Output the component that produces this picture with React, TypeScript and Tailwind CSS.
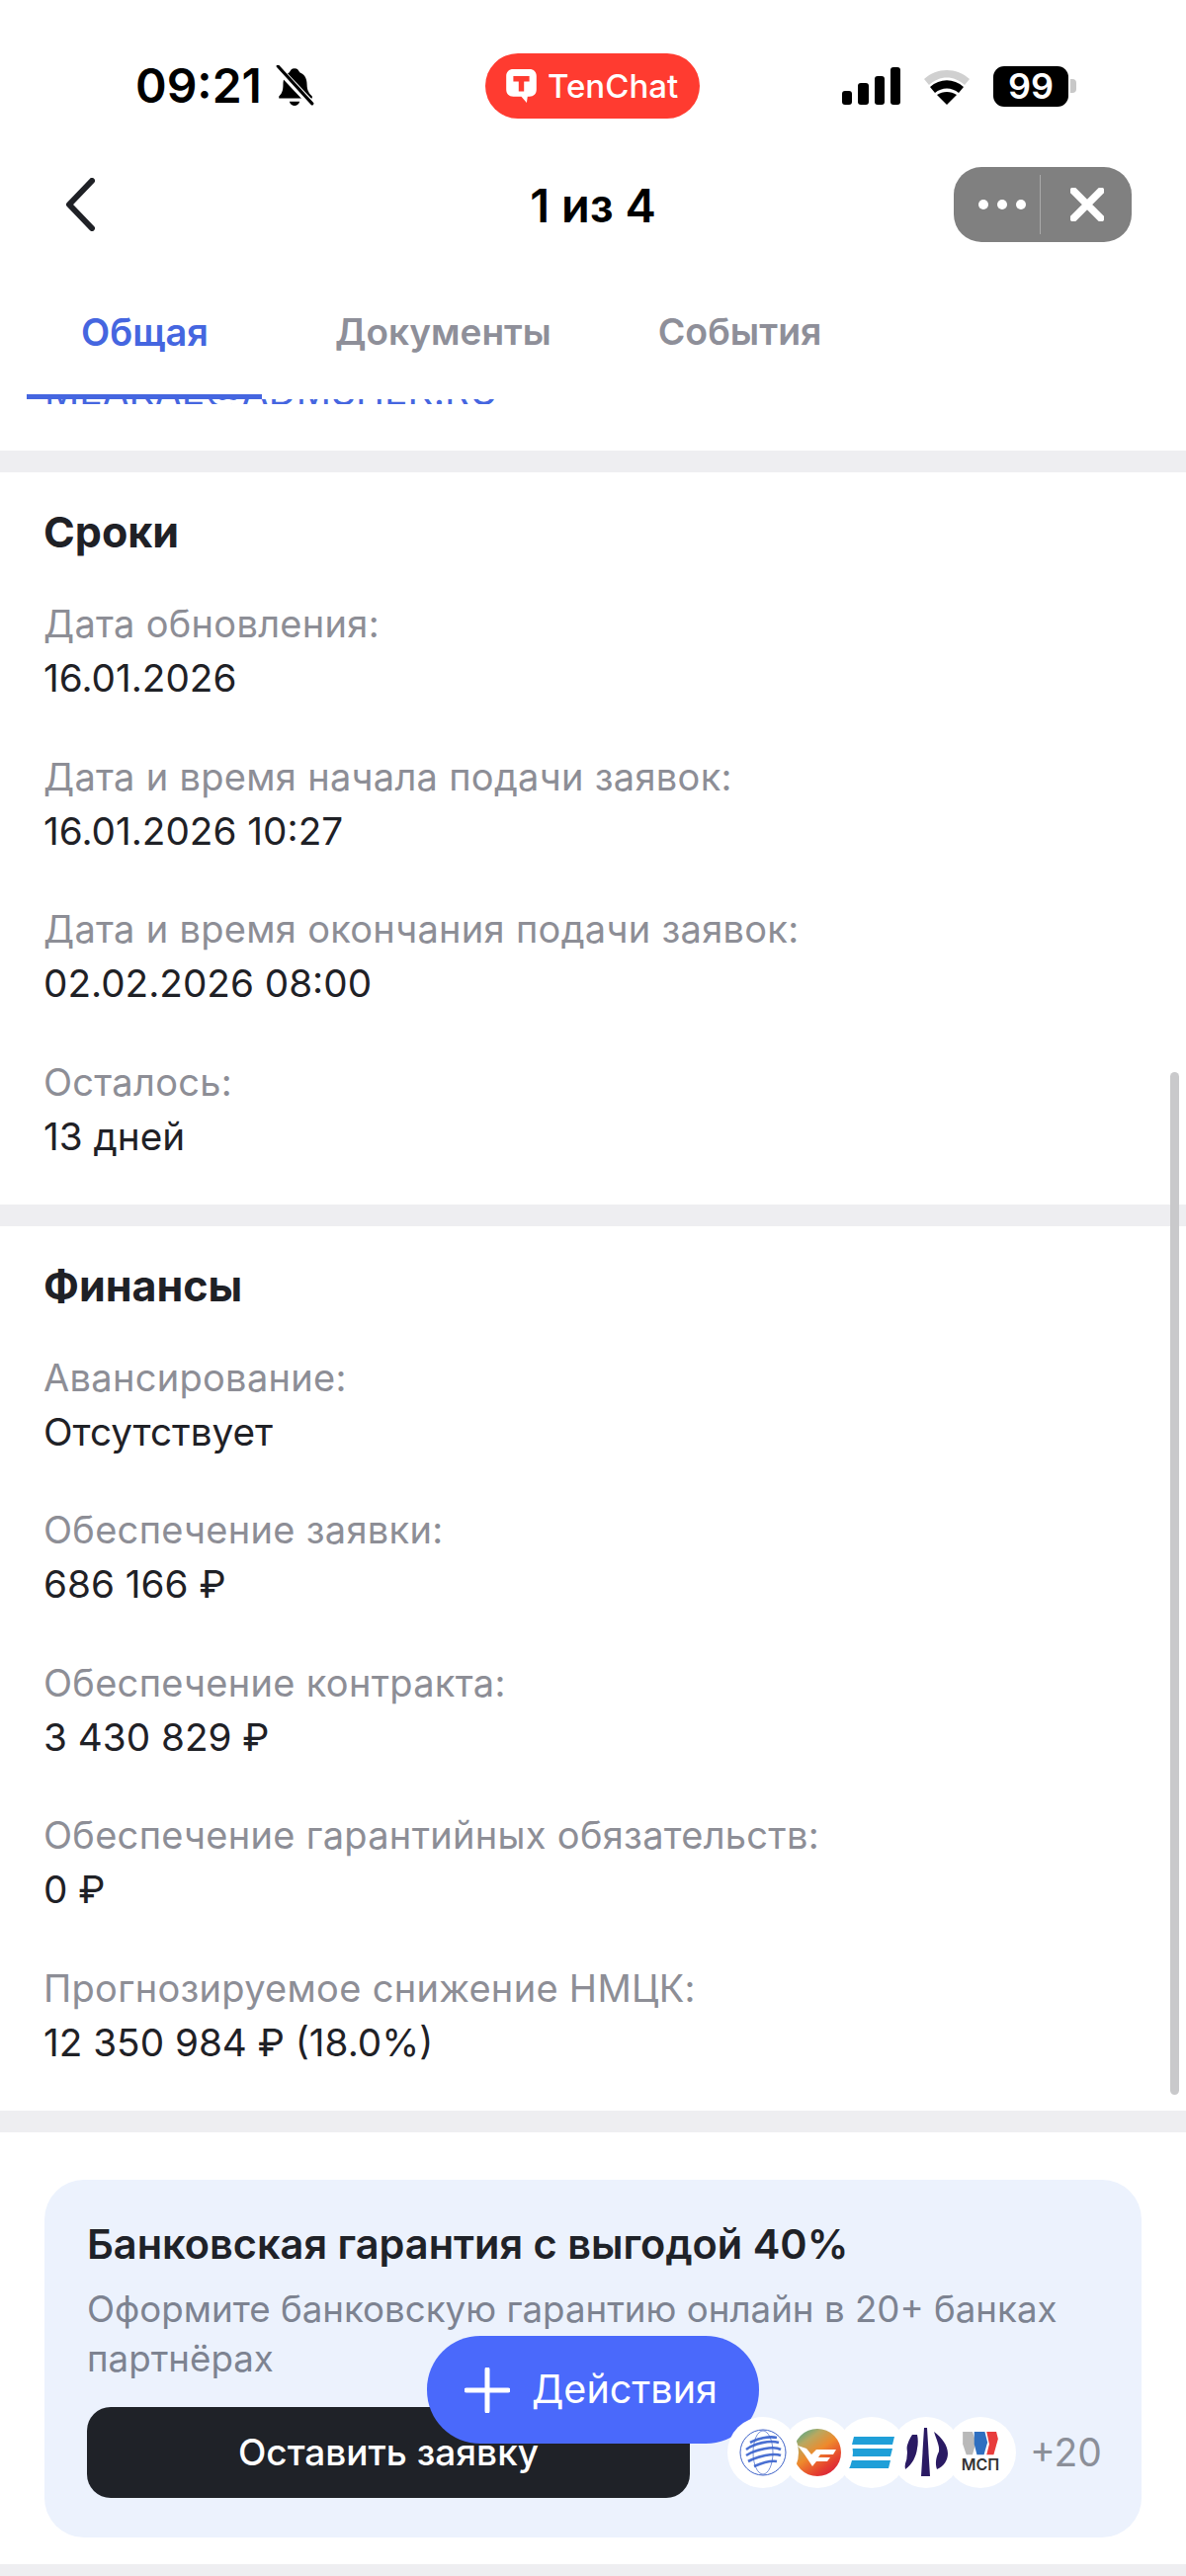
const srokiRows = [
  { label: 'Дата обновления:', value: '16.01.2026' },
  { label: 'Дата и время начала подачи заявок:', value: '16.01.2026 10:27' },
  { label: 'Дата и время окончания подачи заявок:', value: '02.02.2026 08:00' },
  { label: 'Осталось:', value: '13 дней' },
];

const financeRows = [
  { label: 'Авансирование:', value: 'Отсутствует' },
  { label: 'Обеспечение заявки:', value: '686 166 ₽' },
  { label: 'Обеспечение контракта:', value: '3 430 829 ₽' },
  { label: 'Обеспечение гарантийных обязательств:', value: '0 ₽' },
  { label: 'Прогнозируемое снижение НМЦК:', value: '12 350 984 ₽ (18.0%)' },
];

const Band = () => <div className="h-[22px] bg-[#eeeef1]" />;

const Section = ({ title, rows }: { title: string; rows: { label: string; value: string }[] }) => (
  <section className="pl-[44px] pt-[35px] pb-[41px]">
    <h2 className="text-[43px] leading-[50px] font-bold text-[#1f2126]">{title}</h2>
    <div className="mt-[41px] flex flex-col gap-[44.5px]">
      {rows.map((row) => (
        <div key={row.label} className="leading-[55px]">
          <div className="text-[38px] tracking-[0.3px] text-[#8d8e96]">{row.label}</div>
          <div className="text-[38.7px] text-[#1f2126]">{row.value}</div>
        </div>
      ))}
    </div>
  </section>
);

const StatusBar = () => (
  <div className="flex h-[174px] items-start pt-[54px]">
    <div className="flex h-[66px] w-[491px] items-center pl-[137px]">
      <span className="text-[48px] leading-none font-semibold text-black">09:21</span>
      <svg viewBox="0 0 40 40" className="ml-[12px] h-[42px] w-[42px]">
        <path d="M20 3c3 0 4 2 5 4 5 2 7 6 7 12 0 5 2 8 5 11v2H5v-2c3-3 4-6 4-11 0-6 2-10 6-12 1-2 2-4 5-4z" fill="#000" />
        <path d="M15 35h10c-1 3-3 4-5 4s-4-1-5-4z" fill="#000" />
        <path d="M3 2l34 36" stroke="#fff" strokeWidth="7" />
        <path d="M4 1l33 36" stroke="#000" strokeWidth="3" strokeLinecap="round" />
      </svg>
    </div>
    <div className="flex h-[66px] w-[217px] items-center gap-[10px] rounded-[33px] bg-[#ff3b30] pl-[20px]">
      <svg viewBox="0 0 36 40" className="h-[36px] w-[33px]">
        <path d="M9 1h18c5 0 8 3 8 8v15c0 5-3 8-8 8h-2l-1 7-6-7H9c-5 0-8-3-8-8V9c0-5 3-8 8-8z" fill="#fff" />
        <path d="M9 9h18v6h-6v11h-6V15H9z" fill="#ff3b30" />
      </svg>
      <span className="text-[33px] leading-none font-medium text-white">TenChat</span>
    </div>
    <div className="ml-[144px] flex h-[66px] items-center">
      <div className="flex h-[38px] items-end gap-[6px]">
        <div className="h-[14px] w-[10px] rounded-[3px] bg-black" />
        <div className="h-[22px] w-[11px] rounded-[3px] bg-black" />
        <div className="h-[29px] w-[10px] rounded-[3px] bg-black" />
        <div className="h-[38px] w-[10px] rounded-[3px] bg-black" />
      </div>
      <svg viewBox="0 0 52 38" className="ml-[21px] h-[38px] w-[52px]">
        <path d="M3 12C16 0 36 0 49 12l-5 6C33 8 19 8 8 18z" fill="#d0d0d0" />
        <path d="M9 20c10-9 24-9 34 0l-5 6c-7-6-17-6-24 0z" fill="#000" />
        <path d="M16 28c6-4 14-4 20 0L26 38z" fill="#000" />
      </svg>
      <div className="ml-[21px] flex h-[41px] w-[76px] items-center justify-center rounded-[11px] bg-black text-[36px] leading-none font-semibold text-white">
        99
      </div>
      <div className="ml-[2px] h-[14px] w-[6px] rounded-r-[4px] bg-[#c8c8c8]" />
    </div>
  </div>
);

const NavBar = () => (
  <div className="relative flex h-[91px] items-center justify-center">
    <svg viewBox="0 0 32 54" className="absolute top-[6px] left-[65px] h-[54px] w-[32px]">
      <path d="M28 3L5 27l23 24" fill="none" stroke="#1f2126" strokeWidth="6" strokeLinecap="round" strokeLinejoin="round" />
    </svg>
    <span className="-mt-[25px] text-[47px] leading-none font-semibold text-black">1 из 4</span>
    <div className="absolute top-[-5px] right-[55px] flex h-[76px] w-[180px] items-center rounded-[28px] bg-[#808080]">
      <div className="flex w-[87px] items-center justify-end gap-[9px] pr-[14px]">
        <div className="h-[10px] w-[10px] rounded-full bg-white" />
        <div className="h-[10px] w-[10px] rounded-full bg-white" />
        <div className="h-[10px] w-[10px] rounded-full bg-white" />
      </div>
      <div className="h-[60px] w-px bg-[#a9a9a9]" />
      <svg viewBox="0 0 32 32" className="ml-[30px] h-[34px] w-[34px]">
        <path d="M3 3l26 26M29 3L3 29" stroke="#fff" strokeWidth="7" strokeLinecap="round" />
      </svg>
    </div>
  </div>
);

const Tabs = () => (
  <div className="flex h-[134px] items-start pt-[46px] text-[37px] leading-[50px] font-semibold text-[#8e8f99]">
    <span className="ml-[82px] text-[38px] text-[#4566e0]">Общая</span>
    <span className="ml-[128px]">Документы</span>
    <span className="ml-[108px] text-[37.5px]">События</span>
  </div>
);

const Logos = () => (
  <div className="flex shrink-0 items-center">
    <div className="relative z-50 flex h-[72px] w-[72px] items-center justify-center rounded-full bg-white">
      <svg viewBox="0 0 48 48" className="h-[48px] w-[48px]">
        <circle cx="24" cy="24" r="23" fill="none" stroke="#3f63c8" strokeWidth="1" />
        <path d="M11 14c7-4 19-7 27-5M7 21c8-6 24-10 33-7M7 27c9-6 28-10 35-6M9 33c9-5 26-9 33-6M15 38c7-3 17-6 23-5" fill="none" stroke="#4a70d2" strokeWidth="2.6" />
        <ellipse cx="24" cy="24" rx="10" ry="22" fill="none" stroke="#3f63c8" strokeWidth="0.7" />
      </svg>
    </div>
    <div className="relative z-40 -ml-[17px] flex h-[72px] w-[72px] items-center justify-center rounded-full bg-white">
      <svg viewBox="0 0 48 48" className="h-[48px] w-[48px]">
        <defs>
          <linearGradient id="vtbg" x1="0.1" y1="0" x2="0.8" y2="1">
            <stop offset="0" stopColor="#3fa88e" />
            <stop offset="0.25" stopColor="#b9a860" />
            <stop offset="0.5" stopColor="#ee8a2c" />
            <stop offset="0.8" stopColor="#e5402f" />
            <stop offset="1" stopColor="#d81f3c" />
          </linearGradient>
        </defs>
        <circle cx="24" cy="24" r="24" fill="url(#vtbg)" />
        <path d="M4 17l9 3 5 6 5-5h20l-3 5H27l-2 3h12l-3 4h-11l-4 5-8-12z" fill="#fff" />
      </svg>
    </div>
    <div className="relative z-30 -ml-[17px] flex h-[72px] w-[72px] items-center justify-center rounded-full bg-white">
      <svg viewBox="0 0 46 32" className="h-[32px] w-[46px]">
        <path d="M5 0h41l-2 8H3zM3 12h41l-2 8H1zM2 24h40l-2 8H0z" fill="#1f9fd8" />
      </svg>
    </div>
    <div className="relative z-20 -ml-[17px] flex h-[72px] w-[72px] items-center justify-center rounded-full bg-white">
      <svg viewBox="0 0 44 50" className="h-[50px] w-[44px]">
        <path d="M20 0h3l3 49h-9z" fill="#2a1a63" />
        <path d="M8 7h5c1 4 1 9 0 14-1 8-5 16-12 21C-1 30 2 16 8 7z" fill="#2a1a63" />
        <path d="M30 4c8 6 14 14 14 22 0 7-4 13-11 16-2-6-1-12 2-18 1-6-3-13-5-20z" fill="#2a1a63" />
      </svg>
    </div>
    <div className="relative z-10 -ml-[17px] flex h-[72px] w-[72px] flex-col items-center justify-center rounded-full bg-white">
      <svg viewBox="0 0 40 28" className="h-[25px] w-[40px]">
        <path d="M0 0h11l4 12-4 14H4L0 14z" fill="#b9b9b9" />
        <path d="M13 0h12l3 12-4 14h-8l-3-12z" fill="#2f6fc0" />
        <path d="M27 0h11l2 8-5 18h-8l3-12z" fill="#e83c3c" />
      </svg>
      <span className="mt-[1px] text-[16px] leading-[15px] font-semibold text-[#333333]">МСП</span>
    </div>
    <span className="ml-[14px] text-[39px] leading-none text-[#8b8f99]">+20</span>
  </div>
);

const PromoCard = () => (
  <div className="px-[45px] pt-[48px] pb-[27px]">
    <div className="rounded-[40px] bg-[#ecf2fd] pl-[43px] pt-[37px] pb-[40px]">
      <h3 className="text-[41.5px] leading-[56px] font-semibold text-[#1f2228]">Банковская гарантия с выгодой 40%</h3>
      <p className="mt-[13px] w-[1010px] text-[36.7px] leading-[50px] text-[#7d8391]">
        Оформите банковскую гарантию онлайн в 20+ банках партнёрах
      </p>
      <div className="mt-[24px] flex items-center gap-[38px]">
        <div className="flex h-[92px] w-[610px] shrink-0 items-center justify-center rounded-[24px] bg-[#1f2228] text-[37px] font-medium text-white">
          Оставить заявку
        </div>
        <Logos />
      </div>
    </div>
  </div>
);

export default function App() {
  return (
    <div className="relative h-[2607px] w-[1200px] overflow-hidden bg-white font-['Inter','Noto_Sans',sans-serif]">
      <StatusBar />
      <NavBar />
      <Tabs />
      <div className="h-[57px]">
        <div className="h-[5px] w-[238px] translate-x-[27px] bg-[#4566e0]" />
        <div className="h-[5px] overflow-hidden pl-[45px]">
          <div className="-mt-[28px] text-[39px] leading-[40px] text-[#4566e0]">MEAKAE@ADMSHEK.RU</div>
        </div>
      </div>
      <Band />
      <Section title="Сроки" rows={srokiRows} />
      <Band />
      <Section title="Финансы" rows={financeRows} />
      <Band />
      <PromoCard />
      <Band />

      <div className="absolute top-[1085px] right-[7px] h-[1035px] w-[9px] rounded-full bg-[#c9c9cb]" />
      <div className="absolute top-[2364px] left-[432px] flex h-[109px] w-[336px] items-center rounded-[54px] bg-[#4a69fb] pl-[38px] text-[39.5px] font-normal text-white">
        <svg viewBox="0 0 46 46" className="h-[46px] w-[46px]">
          <path d="M23 2v42M2 23h42" stroke="#fff" strokeWidth="5" strokeLinecap="round" />
        </svg>
        <span className="ml-[22px]">Действия</span>
      </div>
    </div>
  );
}
